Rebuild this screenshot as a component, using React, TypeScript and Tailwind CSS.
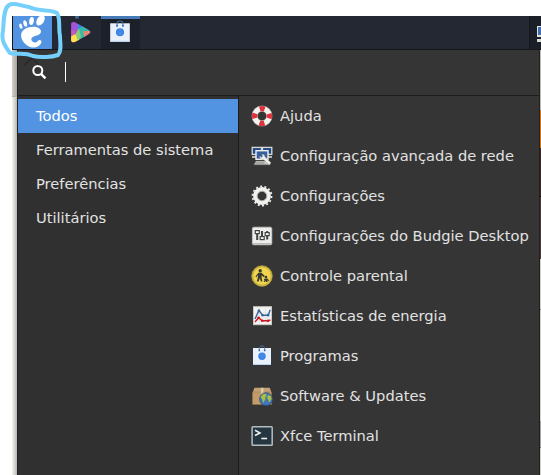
import React from "react";

const categories = ["Todos", "Ferramentas de sistema", "Preferências", "Utilitários"];

function HelpIcon() {
  return (
    <svg width="22" height="22" viewBox="0 0 22 22">
      <circle cx="11" cy="11" r="7.4" fill="none" stroke="#8d8d83" strokeWidth="6.2" />
      <circle cx="11" cy="11" r="7.4" fill="none" stroke="#f5f5f0" strokeWidth="5.2" />
      <circle cx="11" cy="11" r="7.4" fill="none" stroke="#e2303c" strokeWidth="5.2" strokeDasharray="5 6.624" strokeDashoffset="2.5" />
    </svg>
  );
}

function NetworkIcon() {
  return (
    <svg width="22" height="22" viewBox="0 0 22 22">
      <g stroke="#d9d9d4" strokeWidth="1.3" fill="#204a87">
        <rect x="1.2" y="2.4" width="9.3" height="7" />
        <rect x="11.5" y="2.4" width="9.3" height="7" />
      </g>
      <path d="M1 12h5M16 12h5" stroke="#b8b8b2" strokeWidth="2" />
      <rect x="5" y="5.7" width="12" height="8.6" fill="#355f9d" stroke="#efefec" strokeWidth="1.4" />
      <path d="M5 16h12l2 3.8H3z" fill="#c8c8c2" stroke="#777773" strokeWidth=".5" />
      <path d="M4.5 18h9" stroke="#888" />
      <path d="M13 9.5l1 2.3 6 6-1.8 2.2-5.6-5.5-3.3-.7-.8-2.5 2.4 1 .8-.8-.9-2z" fill="#eeeeec" stroke="#999" strokeWidth=".4" />
    </svg>
  );
}

function GearIcon() {
  return (
    <svg width="22" height="22" viewBox="0 0 22 22">
      <circle cx="11" cy="11" r="9.5" fill="none" stroke="#eeeeec" strokeWidth="1.8" strokeDasharray="2 2.2635" />
      <circle cx="11" cy="11" r="6.7" fill="none" stroke="#f2f2ef" strokeWidth="4.4" />
      <circle cx="11" cy="11" r="4.8" fill="none" stroke="#a0a09c" strokeWidth=".9" />
    </svg>
  );
}

function SlidersIcon() {
  return (
    <svg width="22" height="22" viewBox="0 0 22 22">
      <rect x="1.4" y="2.2" width="19.4" height="17.6" rx="1.5" fill="#ededeb" stroke="#c5c5c2" strokeWidth=".8" />
      <path d="M2 18.6h18" stroke="#b6b6b2" />
      <path d="M6.2 6v9M11 6v8M16.2 6v8.5" stroke="#414441" strokeWidth="2" />
      <g fill="#fff" stroke="#414441" strokeWidth="1.2">
        <rect x="4.3" y="5.6" width="4" height="3" />
        <rect x="9.2" y="11.6" width="4" height="3" />
        <rect x="14.2" y="7.6" width="4" height="3" />
      </g>
    </svg>
  );
}

function ParentalIcon() {
  return (
    <svg width="22" height="22" viewBox="0 0 22 22">
      <circle cx="11" cy="11" r="10.3" fill="#f0d64c" stroke="#b59d35" strokeWidth=".7" />
      <circle cx="11" cy="11" r="9.2" fill="none" stroke="#a99840" strokeWidth=".7" />
      <g fill="#393934">
        <circle cx="9.2" cy="5.7" r="1.7" />
        <path d="M7.4 7.8h3.2l3.2 3.3-.8 1.1-2.4-1.7v1.8l.8 4.3H9.8L8.8 13l-1.2 3.6H5.8l1.1-4.6V10l-1.5 2.2-1-.7z" />
        <circle cx="15" cy="12" r="1.3" />
        <path d="M13.7 13.6h2.6l1.8 1.7-.7.7-1.2-.6.4 1.6h-1.3l-.6-.9-.9.9h-1.2l1-1.7-.8-.8z" />
      </g>
    </svg>
  );
}

function StatsIcon() {
  return (
    <svg width="22" height="22" viewBox="0 0 22 22">
      <rect x="2.5" y="1.7" width="18" height="18" fill="#f3f3f1" stroke="#c8c8c4" />
      <path d="M4 8h15M4 13h15M8.5 3v15M14.5 3v15" stroke="#dddedb" strokeWidth=".6" />
      <path d="M4 14l3.9-8.6 3.7 4.8h5.6l2-5.4" fill="none" stroke="#3465a4" strokeWidth="1.4" />
      <path d="M4 17l3.6-4.2 3.6 3h6.3l2-1" fill="none" stroke="#cc1925" strokeWidth="1.4" />
      <g fill="#3465a4"><circle cx="7.9" cy="5.8" r="1.4" /><circle cx="11.6" cy="10.2" r="1.3" /><circle cx="17" cy="10.2" r="1.4" /></g>
      <g fill="#cc1925"><circle cx="7.6" cy="12.8" r="1.4" /><circle cx="11.2" cy="15.8" r="1.3" /><circle cx="17" cy="15.8" r="1.4" /></g>
    </svg>
  );
}

function BagIcon({ size = 22 }: { size?: number }) {
  return (
    <svg width={size} height={size} viewBox="0 0 22 22">
      <path d="M2 3h18v17H2z" fill="#e9f1fd" />
      <path d="M2 19h18v1H2z" fill="#b9d0ef" />
      <path d="M8.3 5.3V3.6C8.3 1.8 9.3.9 11 .9s2.7.9 2.7 2.7v1.7" fill="none" stroke="#42709f" strokeWidth="1" />
      <circle cx="8.3" cy="5.4" r=".9" fill="#356dac" />
      <circle cx="13.7" cy="5.4" r=".9" fill="#356dac" />
      <circle cx="11" cy="11.2" r="3.7" fill="#357fe0" />
      <path d="M7.5 11.2h7M11 7.7v7M8.5 9.2h5M8.5 13.2h5" stroke="#65a3ee" strokeWidth=".4" />
    </svg>
  );
}

function UpdatesIcon() {
  return (
    <svg width="22" height="22" viewBox="0 0 22 22">
      <path d="M3.4 2.8h15.4l1.6 4.5H1.8z" fill="#c5a274" />
      <path d="M1.5 7h19v12.5h-19z" fill="#c39b69" stroke="#9d7648" strokeWidth=".5" />
      <path d="M10 2.8h2.4v6H10z" fill="#decba9" />
      <circle cx="15" cy="14.2" r="6.4" fill="#4276b6" stroke="#274e82" strokeWidth=".8" />
      <path d="M9.5 12l2.7-3 3.4-.3-.7 1.8 1.2.8-2 .8.4 2-2.4 4-.8-3.6zM17.2 10l2.8 1 .5 3-2 3.5-1.4-3-1.1-1.8z" fill="#a9c03d" />
    </svg>
  );
}

function TerminalIcon() {
  return (
    <svg width="22" height="22" viewBox="0 0 22 22">
      <rect x="1.1" y="1.8" width="20.1" height="18.4" rx=".8" fill="#263640" stroke="#b2bcc3" strokeWidth="1.5" />
      <path d="M4 5.3l4.9 2.6L4 10.5" fill="none" stroke="#eef2f2" strokeWidth="1.6" />
      <path d="M10.3 13.5h5.8" stroke="#eef2f2" strokeWidth="1.6" />
    </svg>
  );
}

const apps = [
  { name: "Ajuda", icon: <HelpIcon /> },
  { name: "Configuração avançada de rede", icon: <NetworkIcon /> },
  { name: "Configurações", icon: <GearIcon /> },
  { name: "Configurações do Budgie Desktop", icon: <SlidersIcon /> },
  { name: "Controle parental", icon: <ParentalIcon /> },
  { name: "Estatísticas de energia", icon: <StatsIcon /> },
  { name: "Programas", icon: <BagIcon /> },
  { name: "Software & Updates", icon: <UpdatesIcon /> },
  { name: "Xfce Terminal", icon: <TerminalIcon /> },
];

function TaskBar() {
  return (
    <header className="ml-3 flex h-[34px] border-b border-[#15171c] bg-[#242832]">
      <div className="w-10 shrink-0 border-l border-[#14161b] bg-[#5294e2]">
        <svg width="39" height="33" viewBox="0 0 39 33" fill="white">
          <ellipse cx="27.5" cy="4.3" rx="3.5" ry="5.7" transform="rotate(32 27.5 4.3)" />
          <ellipse cx="18.5" cy="5" rx="2.3" ry="4" transform="rotate(10 18.5 5)" />
          <ellipse cx="12.2" cy="7.5" rx="1.8" ry="3.3" transform="rotate(-14 12.2 7.5)" />
          <ellipse cx="7.8" cy="10.2" rx="1.5" ry="2.7" transform="rotate(-20 7.8 10.2)" />
          <path d="M8.2 18C9 13.5 14.5 10.7 20.5 10.7c5 0 8.1 2.6 7.4 5.6-1 4-9.2 3-9.6 6.7-.2 2.2 2.5 3.8 4.6 3.4 2-.3 2-2.8 4.4-2.2 3.2.8-.4 7.3-6.8 7.4C13.6 31.7 7.1 24 8.2 18z" />
        </svg>
      </div>
      <div className="flex w-[49px] shrink-0 flex-col items-center">
        <div className="h-[3px] w-1 rounded-b-full bg-[#3b6798]" />
        <svg width="22" height="22" viewBox="0 0 20 22" preserveAspectRatio="none" className="mt-[2px] ml-[9px]">
          <defs>
            <clipPath id="play-shape"><path d="M1 3C1 1 3 .4 4.8 1.4l12.5 7.8c1.6 1 1.6 2.8 0 3.8L4.6 21c-1.8 1-3.6 0-3.6-2z" /></clipPath>
          </defs>
          <g clipPath="url(#play-shape)">
            <path d="M0 0h20v22H0z" fill="#a453d6" />
            <path d="M0 9l5 1-2 8H0z" fill="#c85bb5" />
            <path d="M7 0h5l8 10h-8L7 8z" fill="#348bdc" />
            <path d="M8 8l4-3 6 5-4 6-7 4z" fill="#37baa8" />
            <path d="M12 10h8l-7 7z" fill="#e78673" />
            <path d="M0 16l5-3 4 7-9 2z" fill="#ffe34c" />
            <path d="M5 13l3-6 2 9-3 3z" fill="#87cf75" />
          </g>
        </svg>
      </div>
      <div className="flex w-[39px] shrink-0 border-t-[3px] border-[#477ab8] bg-[#1c2029] pt-px pl-[7px]">
        <BagIcon size={24} />
      </div>
      <div className="grow" />
      <div className="flex w-3 shrink-0 justify-end border-l border-[#15171c] bg-[#1b1f28] pt-2.5">
        <svg width="4" height="18" viewBox="0 0 4 18">
          <path d="M0 0h4v11H0z" fill="#e4e4de" />
          <path d="M1 1h3v8H1z" fill="#3e70b2" />
          <path d="M0 13h4v3H0z" fill="#d8d8d2" />
        </svg>
      </div>
    </header>
  );
}

function AppMenu() {
  return (
    <main className="flex w-[523px] shrink-0 flex-col border-x border-[#202020] bg-[#353535]">
      <div className="flex h-[46px] shrink-0 border-b border-[#1c1c1c] pl-3.5 pt-3">
        <svg width="16" height="16" viewBox="0 0 16 16" fill="none" stroke="#fff" className="mt-[3px]">
          <circle cx="5.8" cy="5.5" r="4.5" strokeWidth="2" />
          <path d="M9 8.8l4.5 4.5" strokeWidth="2.5" />
        </svg>
        <div className="ml-[17px] h-5 w-px bg-white" />
      </div>
      <div className="flex min-h-0 grow">
        <nav className="w-[221px] shrink-0 border-r border-[#1c1c1c] bg-[#303030] pt-[3px]">
          {categories.map((category, index) => (
            <div
              key={category}
              className={`flex h-[34px] items-center whitespace-nowrap pl-[18px] ${index === 0 ? "bg-[#5294e2] text-white" : ""}`}
            >
              {category}
            </div>
          ))}
        </nav>
        <section className="grow">
          {apps.map((app) => (
            <div key={app.name} className="flex h-10 items-center gap-[7px] whitespace-nowrap pl-3">
              <div className="shrink-0">{app.icon}</div>
              <span>{app.name}</span>
            </div>
          ))}
        </section>
      </div>
    </main>
  );
}

export default function App() {
  return (
    <div className="relative flex h-[475px] w-[541px] flex-col overflow-hidden bg-white pt-4 font-['DejaVu_Sans',sans-serif] text-[14.667px] leading-5 text-[#e2e2e2]">
      <TaskBar />
      <div className="flex min-h-0 grow pl-3">
        <div className="flex w-[5px] shrink-0 flex-col">
          <div className="h-[47px] border-b border-[#b8b0a8] bg-linear-to-r from-[#d5d3cc] to-[#a7a59e]" />
          <div className="grow bg-linear-to-r from-[#f4f4f1] to-[#b9b9b5]" />
        </div>
        <AppMenu />
        <div className="flex w-px shrink-0 flex-col bg-[#d0cfcc]">
          <div className="h-[60px] bg-[#bcbbb7]" />
          <div className="h-[38px] bg-[#d6770d]" />
          <div className="h-[49px] border-b border-black bg-[#39292a]" />
          <div className="h-[62px] bg-[#493d3b]" />
          <div className="h-[51px] border-b border-[#888]" />
          <div className="h-[111px]" />
          <div className="h-[27px] border-b border-[#777] bg-[#a5a5a3]" />
        </div>
      </div>
      <svg className="pointer-events-none absolute left-0 top-0" width="70" height="70" viewBox="0 0 70 70" fill="none">
        <path d="M24 65l8-7 7 7" stroke="#292929" strokeWidth="1.3" />
        <path d="M29 7C21 6 14 2 9 5C3 9 4 22 3 31C1 39 4 45 10 53C17 55 25 52 33 56C41 58 52 57 58 55C62 51 60 43 60 36C58 28 61 20 57 13C51 9 39 12 29 7Z" stroke="#75cffb" strokeWidth="4" strokeLinecap="round" strokeLinejoin="round" />
      </svg>
    </div>
  );
}
